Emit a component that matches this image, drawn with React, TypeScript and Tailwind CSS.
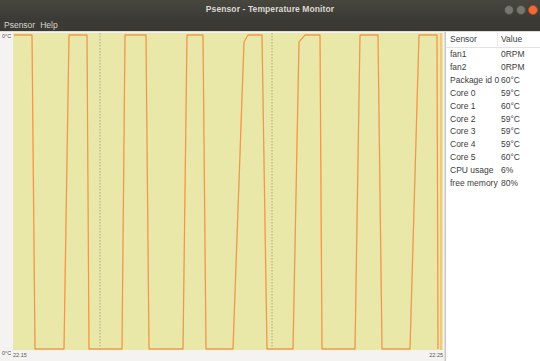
import React from "react";

const rows: [string, string][] = [
  ["fan1", "0RPM"],
  ["fan2", "0RPM"],
  ["Package id 0", "60°C"],
  ["Core 0", "59°C"],
  ["Core 1", "60°C"],
  ["Core 2", "59°C"],
  ["Core 3", "59°C"],
  ["Core 4", "59°C"],
  ["Core 5", "60°C"],
  ["CPU usage", "6%"],
  ["free memory", "80%"],
];

// absolute page coords, converted to plot coords (x-13, y-33)
const pts: [number, number][] = [
  [14, 35], [32, 35], [35, 349], [64, 349], [69, 35], [87, 35], [89, 349],
  [122, 349], [125, 35], [146, 35], [149, 349], [183, 349], [187, 35],
  [203, 35], [206, 349], [233, 349], [244, 42], [248, 35], [262, 35],
  [267, 349], [293, 349], [299, 42], [305, 35], [320, 35], [322, 349],
  [355, 349], [360, 35], [378, 35], [382, 349], [410, 349], [419, 35],
  [437, 35], [438, 349],
];

function Plot() {
  const d = pts
    .map(([x, y], i) => `${i === 0 ? "M" : "L"}${x - 13} ${y - 33}`)
    .join(" ");
  return (
    <svg width="430" height="317" viewBox="0 0 430 317" className="block">
      <rect x="0" y="0" width="430" height="317" fill="#e9e8a8" />
      <line x1="87" y1="0" x2="87" y2="317" stroke="#9c9c7c" strokeWidth="0.8" strokeDasharray="1.5 1.5" />
      <line x1="259" y1="0" x2="259" y2="317" stroke="#9c9c7c" strokeWidth="0.8" strokeDasharray="1.5 1.5" />
      <path d={d} fill="none" stroke="#f3aa58" strokeWidth="1.3" strokeLinejoin="round" />
      <path d={d} fill="none" stroke="#e0703a" strokeWidth="0.5" strokeLinejoin="round" opacity="0.6" />
      <line x1="428" y1="0" x2="428" y2="317" stroke="#f3aa58" strokeWidth="1" />
    </svg>
  );
}

function WinButton({ close }: { close?: boolean }) {
  return (
    <div
      className={
        close
          ? "w-[10px] h-[10px] rounded-full bg-[#ee6a3a] border border-[#b8481f]"
          : "w-[10px] h-[10px] rounded-full bg-[#77766f] border border-[#4e4d48]"
      }
    />
  );
}

export default function App() {
  return (
    <div
      className="w-[540px] h-[361px] flex flex-col overflow-hidden bg-[#f4f3f2]"
      style={{ fontFamily: '"Liberation Sans", Arial, sans-serif' }}
    >
      <div className="h-[19px] grid grid-cols-[1fr_auto_1fr] items-center bg-gradient-to-b from-[#47463f] to-[#3b3a35]">
        <div />
        <div className="text-[8.5px] font-bold text-[#dcd9d2] tracking-[0.1px]">Psensor - Temperature Monitor</div>
        <div className="flex justify-end items-center gap-[2px] pr-[2px]">
          <WinButton />
          <WinButton />
          <WinButton close />
        </div>
      </div>
      <div className="h-[12px] bg-[#3b3a35] flex items-center gap-[5px] pl-[4px] text-[8.5px] text-[#d8d5ce]">
        <span>Psensor</span>
        <span>Help</span>
      </div>
      <div className="h-px bg-[#dedcd8]" />
      <div className="flex-1 flex min-h-0">
        <div className="w-[444px] flex flex-col bg-[#f4f3f2]">
          <div className="flex pt-px">
            <div className="w-[13px] text-[5.5px] text-[#555] pl-[2px] pt-[1px] leading-none">0°C</div>
            <Plot />
          </div>
          <div className="flex items-start text-[5.5px] text-[#555] leading-none">
            <span className="w-[13px] pl-[2px] pt-[1px]">0°C</span>
            <span className="pt-[3px]">22:15</span>
            <span className="ml-auto pt-[3px] pr-[1px]">22:25</span>
          </div>
        </div>
        <div className="w-[2px] bg-[#cac8c4] border-l border-[#e0dfdc]" />
        <div className="flex-1 bg-white text-[8.5px] text-[#3c3c3c]">
          <div className="h-[16px] flex items-center border-b border-[#e4e3e1]">
            <span className="w-[52px] pl-[4px] border-r border-[#ebeae8]">Sensor</span>
            <span className="pl-[3px]">Value</span>
          </div>
          {rows.map(([n, v]) => (
            <div key={n} className="h-[12.9px] flex items-center">
              <span className="w-[52px] pl-[4px] whitespace-nowrap">{n}</span>
              <span className="pl-[3px]">{v}</span>
            </div>
          ))}
        </div>
      </div>
    </div>
  );
}
